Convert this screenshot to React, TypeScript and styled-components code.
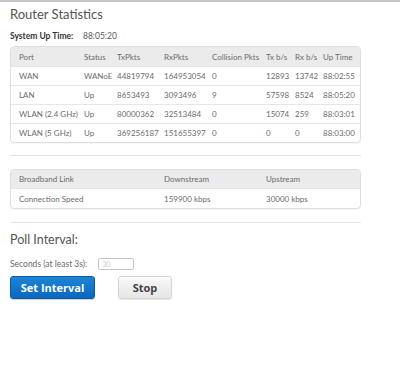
import styled, { createGlobalStyle } from "styled-components";

const GlobalStyle = createGlobalStyle`
  html, body {
    margin: 0;
    padding: 0;
    background: #ffffff;
  }
  body {
    font-family: Lato, "Open Sans", sans-serif;
    color: #5a5a5a;
  }
`;

const Page = styled.div`
  width: 400px;
  height: 367px;
  border-top: 2px solid #c8c8c8;
  box-sizing: border-box;
  padding: 0 10px 0 10px;
`;

const Content = styled.div`
  width: 351px;
  display: flex;
  flex-direction: column;
`;

const Title = styled.h1`
  margin: 2px 0 0 0;
  font-size: 13px;
  font-weight: 400;
  line-height: 20px;
  color: #555;
`;

const UpTimeRow = styled.div`
  display: flex;
  align-items: center;
  height: 16px;
  margin-top: 4px;
  font-size: 8.5px;
`;

const UpLabel = styled.span`
  font-weight: 700;
  color: #333;
  width: 73px;
`;

const Panel = styled.div`
  border: 1px solid #dedede;
  border-radius: 4px;
  overflow: hidden;
  box-shadow: 0 1px 1px rgba(0, 0, 0, 0.04);
  margin-top: ${(p: { $top: number }) => p.$top}px;
`;

const Table = styled.table`
  width: 100%;
  border-collapse: collapse;
  table-layout: fixed;
  font-size: 8px;
  color: #6b6b6b;
`;

const Head = styled.th<{ $h: number }>`
  background: #ebebeb;
  font-weight: 400;
  text-align: left;
  height: ${(p) => p.$h}px;
  padding: 0 0 0 8px;
  white-space: nowrap;
  color: #6b6b6b;
`;

const Cell = styled.td<{ $h: number }>`
  height: ${(p) => p.$h}px;
  padding: 0 0 0 8px;
  border-top: 1px solid #e6e6e6;
  white-space: nowrap;
`;

const Rule = styled.hr`
  border: none;
  border-top: 1px solid #e3e3e3;
  margin: ${(p: { $top: number }) => p.$top}px 0 0 0;
  width: 351px;
`;

const PollTitle = styled.h2`
  margin: 8px 0 0 0;
  font-size: 12.5px;
  font-weight: 400;
  line-height: 18px;
  color: #555;
`;

const FieldRow = styled.div`
  display: flex;
  align-items: center;
  margin-top: 9px;
  font-size: 8.5px;
  color: #6b6b6b;
  gap: 11px;
`;

const Input = styled.input`
  width: 36px;
  height: 12px;
  box-sizing: border-box;
  border: 1px solid #c4c4c4;
  border-radius: 2px;
  font-size: 7px;
  padding: 0 3px;
  font-family: Lato, sans-serif;
  &::placeholder {
    color: #c8c8c8;
  }
`;

const Buttons = styled.div`
  display: flex;
  gap: 23px;
  margin-top: 6px;
`;

const Button = styled.button<{ $primary?: boolean }>`
  height: 23px;
  width: ${(p) => (p.$primary ? 85 : 54)}px;
  border-radius: 3px;
  font-family: "Open Sans", sans-serif;
  font-weight: 700;
  font-size: 11px;
  cursor: pointer;
  padding: 0;
  color: ${(p) => (p.$primary ? "#ffffff" : "#444")};
  border: 1px solid ${(p) => (p.$primary ? "#0a5aa6" : "#d6d6d6")};
  background: ${(p) =>
    p.$primary
      ? "linear-gradient(#1d84d6, #0b67bd)"
      : "linear-gradient(#ffffff 0%, #f4f4f4 20%, #e6e6e6 100%)"};
  box-shadow: ${(p) =>
    p.$primary ? "0 1px 1px rgba(0,0,0,0.2)" : "0 1px 1px rgba(0,0,0,0.1)"};
`;

const ports = [
  ["WAN", "WANoE", "44819794", "164953054", "0", "12893", "13742", "88:02:55"],
  ["LAN", "Up", "8653493", "3093496", "9", "57598", "8524", "88:05:20"],
  ["WLAN (2.4 GHz)", "Up", "80000362", "32513484", "0", "15074", "259", "88:03:01"],
  ["WLAN (5 GHz)", "Up", "369256187", "151655397", "0", "0", "0", "88:03:00"],
];

const portHeads = ["Port", "Status", "TxPkts", "RxPkts", "Collision Pkts", "Tx b/s", "Rx b/s", "Up Time"];
const portWidths = [65, 33, 47, 48, 54, 29, 28, 47];

const linkHeads = ["Broadband Link", "Downstream", "Upstream"];
const linkWidths = [145, 102, 104];

export default function App() {
  return (
    <>
      <GlobalStyle />
      <Page>
        <Content>
          <Title>Router Statistics</Title>
          <UpTimeRow>
            <UpLabel>System Up Time:</UpLabel>
            <span>88:05:20</span>
          </UpTimeRow>

          <Panel $top={2}>
            <Table>
              <colgroup>
                {portWidths.map((w, i) => (
                  <col key={i} style={{ width: w }} />
                ))}
              </colgroup>
              <thead>
                <tr>
                  {portHeads.map((h) => (
                    <Head key={h} $h={19}>{h}</Head>
                  ))}
                </tr>
              </thead>
              <tbody>
                {ports.map((row) => (
                  <tr key={row[0]}>
                    {row.map((c, i) => (
                      <Cell key={i} $h={18}>{c}</Cell>
                    ))}
                  </tr>
                ))}
              </tbody>
            </Table>
          </Panel>

          <Rule $top={12} />

          <Panel $top={13}>
            <Table>
              <colgroup>
                {linkWidths.map((w, i) => (
                  <col key={i} style={{ width: w }} />
                ))}
              </colgroup>
              <thead>
                <tr>
                  {linkHeads.map((h) => (
                    <Head key={h} $h={18}>{h}</Head>
                  ))}
                </tr>
              </thead>
              <tbody>
                <tr>
                  <Cell $h={19}>Connection Speed</Cell>
                  <Cell $h={19}>159900 kbps</Cell>
                  <Cell $h={19}>30000 kbps</Cell>
                </tr>
              </tbody>
            </Table>
          </Panel>

          <Rule $top={13} />

          <PollTitle>Poll Interval:</PollTitle>
          <FieldRow>
            <span>Seconds (at least 3s):</span>
            <Input placeholder="30" />
          </FieldRow>
          <Buttons>
            <Button $primary>Set Interval</Button>
            <Button>Stop</Button>
          </Buttons>
        </Content>
      </Page>
    </>
  );
}
